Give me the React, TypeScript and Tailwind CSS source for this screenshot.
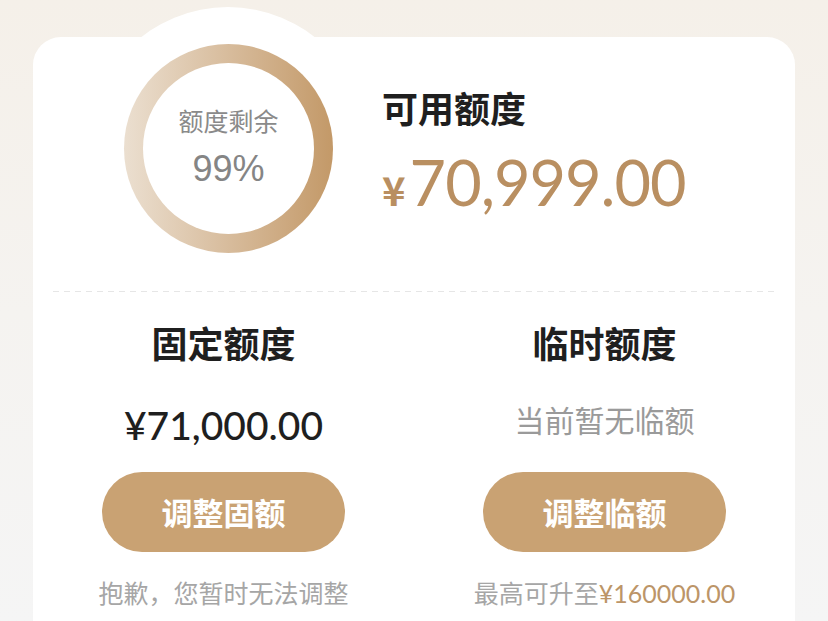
import React from "react";

const cjk = { fontFamily: '"Noto Sans CJK SC", "Noto Sans", sans-serif' };
const num = { fontFamily: 'Lato, "Noto Sans CJK SC", sans-serif' };

export default function App() {
  return (
    <div className="w-full h-[621px] overflow-hidden bg-gradient-to-b from-[#f5f0e9] via-[#f5f3f0] to-[#f5f5f5]" style={cjk}>
      <div className="relative mx-[33px] mt-[37px] bg-white rounded-t-[28px] h-[620px]">
        <div className="absolute left-[55px] top-[-30px] w-[280px] h-[280px] rounded-full bg-white" />
        <div className="relative flex pt-[7px]">
          <div className="ml-[91px] w-[209px] h-[209px] rounded-full bg-gradient-to-r from-[#ebdfd0] to-[#c39968] p-[19px]">
            <div className="w-full h-full rounded-full bg-white flex flex-col items-center">
              <div className="mt-[41px] text-[25px] leading-[32px] text-[#8a8a8a]">额度剩余</div>
              <div className="mt-[12px] text-[36px] leading-[42px] text-[#858585]" style={{ fontFamily: '"Liberation Sans", sans-serif' }}>99%</div>
            </div>
          </div>
          <div className="ml-[49px] flex flex-col">
            <div className="mt-[41px] text-[36px] leading-[44px] font-bold text-[#1f1f1f]">可用额度</div>
            <div className="mt-[17px] flex items-baseline text-[#b98f61]">
              <span className="text-[40px] mr-[4px] font-semibold">¥</span>
              <span className="text-[63px] leading-[72px] tracking-[-1px]" style={num}>70,999.00</span>
            </div>
          </div>
        </div>
        <div className="relative mx-[20px] mt-[38px] h-px bg-[repeating-linear-gradient(90deg,#e6e6e6_0_6px,transparent_6px_11px)]" />
        <div className="relative grid grid-cols-2">
          <div className="flex flex-col items-center">
            <div className="mt-[28px] text-[36px] leading-[44px] font-bold text-[#1f1f1f]">固定额度</div>
            <div className="h-[108px] pt-[38px]">
              <div className="text-[39px] leading-[46px] font-medium text-[#1f1f1f]" style={num}>¥71,000.00</div>
            </div>
            <div className="w-[243px] h-[80px] rounded-full bg-[#c9a273] flex items-center justify-center text-white text-[31px] font-bold">调整固额</div>
            <div className="mt-[24px] text-[25px] leading-[32px] text-[#a6a6a6]">抱歉，您暂时无法调整</div>
          </div>
          <div className="flex flex-col items-center">
            <div className="mt-[28px] text-[36px] leading-[44px] font-bold text-[#1f1f1f]">临时额度</div>
            <div className="h-[108px] pt-[35px]">
              <div className="text-[30px] leading-[40px] text-[#9a9a9a]">当前暂无临额</div>
            </div>
            <div className="w-[243px] h-[80px] rounded-full bg-[#c9a273] flex items-center justify-center text-white text-[31px] font-bold">调整临额</div>
            <div className="mt-[24px] text-[25px] leading-[32px] text-[#a6a6a6]">
              最高可升至<span className="text-[#bc9568]" style={num}>¥160000.00</span>
            </div>
          </div>
        </div>
      </div>
    </div>
  );
}
